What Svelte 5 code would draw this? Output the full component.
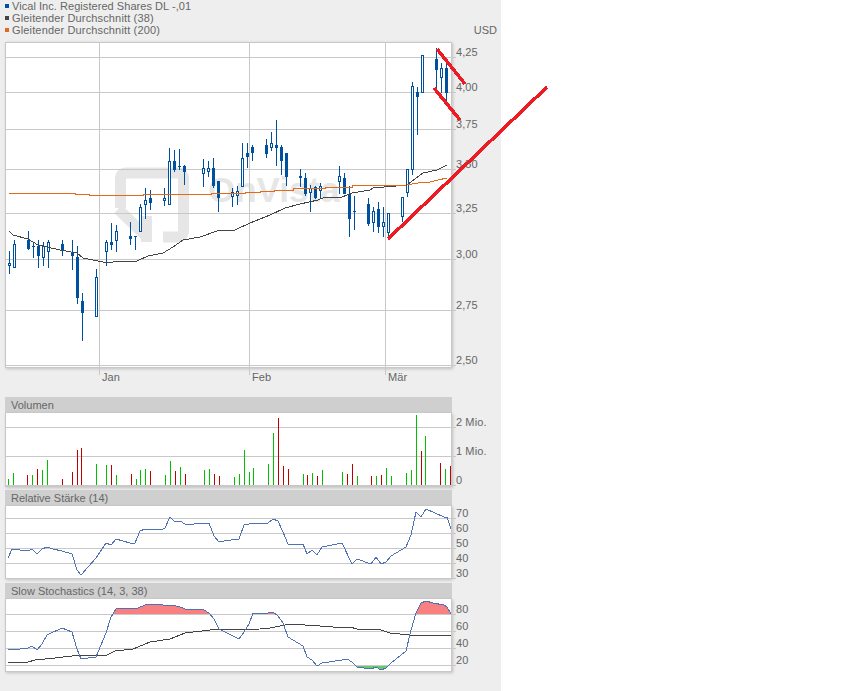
<script>
  const hGrid = [57, 92, 129, 169, 213, 259, 310, 365];
  const vGrid = [99, 249, 385];
  const priceLabels = [['4,25', 56], ['4,00', 91], ['3,75', 128], ['3,50', 168], ['3,25', 212], ['3,00', 258], ['2,75', 309], ['2,50', 364]];
  const months = [['Jan', 102], ['Feb', 252], ['Mär', 388]];

  // x, wick top, wick bottom, body top, body bottom, hollow
  const candles = [
    [9, 251, 274, 263, 266, 1], [14, 240, 268, 244, 268, 1], [28, 231, 250, 240, 249, 0], [33, 242, 258, 246, 247, 0],
    [38, 240, 268, 246, 256, 0], [43, 242, 266, 246, 258, 1], [48, 240, 268, 242, 252, 1], [62, 240, 256, 244, 251, 0],
    [72, 240, 270, 252, 256, 0], [77, 246, 304, 257, 298, 0], [82, 293, 341, 301, 313, 0], [96, 269, 317, 277, 317, 1],
    [106, 240, 266, 242, 252, 1], [111, 223, 250, 242, 245, 0], [116, 225, 252, 231, 241, 1], [130, 222, 245, 236, 239, 0],
    [135, 236, 250, 236, 237, 0], [140, 204, 232, 207, 232, 1], [145, 188, 219, 200, 205, 1], [150, 190, 210, 198, 203, 0],
    [164, 188, 206, 198, 201, 1], [169, 148, 205, 161, 205, 1], [174, 150, 172, 161, 170, 0], [179, 149, 170, 166, 167, 0],
    [184, 165, 185, 166, 172, 0], [203, 159, 187, 168, 174, 1], [208, 161, 177, 168, 172, 1], [213, 158, 188, 168, 186, 0],
    [218, 181, 212, 181, 198, 0], [232, 188, 207, 192, 197, 1], [237, 186, 205, 191, 196, 1], [242, 143, 187, 158, 187, 1],
    [247, 143, 168, 153, 157, 0], [252, 145, 161, 147, 153, 0], [266, 139, 158, 145, 154, 0], [271, 132, 151, 143, 148, 1],
    [276, 120, 166, 145, 148, 0], [281, 145, 175, 147, 161, 0], [286, 153, 186, 153, 177, 0], [300, 169, 187, 176, 178, 1],
    [305, 173, 196, 178, 194, 0], [310, 185, 212, 188, 193, 1], [315, 186, 199, 187, 198, 0], [320, 183, 199, 186, 191, 1],
    [339, 166, 194, 176, 182, 1], [344, 173, 194, 178, 194, 0], [349, 186, 237, 194, 219, 0], [354, 196, 230, 211, 212, 0],
    [368, 198, 226, 204, 224, 0], [373, 207, 232, 211, 223, 1], [378, 202, 233, 209, 227, 0], [383, 207, 237, 222, 227, 1],
    [388, 213, 237, 213, 233, 1], [402, 197, 222, 197, 217, 1], [407, 169, 197, 169, 193, 1], [412, 82, 175, 86, 170, 1],
    [417, 87, 135, 92, 97, 0], [422, 55, 93, 55, 93, 1], [436, 48, 88, 59, 70, 0], [441, 63, 93, 68, 78, 1], [446, 62, 102, 68, 93, 0]
  ];

  const ma38 = '9,231 13,235 28,239 38,245 60,250 77,253 83,258 103,262 113,262 137,261 148,256 163,253 173,247 183,240 200,237 217,231 235,230 250,223 260,219 270,215 285,208 300,204 318,200 325,197 342,197 352,193 370,190 373,188 407,185 423,173 437,170 447,165';
  const ma200 = '9,193 75,193 75,194 89,194 89,195 143,195 143,194 211,194 211,193 245,193 245,192 260,192 260,191 274,191 274,190 293,190 293,188 325,188 325,187 352,187 352,186 407,185 418,183 430,182 438,180 447,178';

  // x, top, up
  const volume = [
    [8, 479, 1], [13, 473, 1], [27, 475, 0], [32, 475, 1], [37, 469, 0], [42, 470, 1], [47, 460, 1], [62, 479, 0],
    [72, 472, 0], [77, 450, 0], [81, 448, 0], [96, 464, 1], [106, 465, 1], [111, 465, 0], [116, 475, 1], [131, 474, 0],
    [136, 479, 1], [140, 470, 1], [145, 469, 1], [150, 471, 0], [165, 475, 1], [170, 461, 1], [175, 471, 0], [180, 467, 1],
    [185, 474, 0], [204, 470, 1], [209, 469, 1], [214, 474, 0], [219, 476, 0], [234, 477, 1], [239, 474, 1], [244, 450, 1],
    [249, 472, 1], [253, 468, 1], [268, 464, 1], [273, 433, 1], [278, 418, 0], [283, 466, 0], [288, 469, 0], [303, 474, 1],
    [307, 475, 0], [312, 473, 1], [317, 476, 0], [322, 470, 1], [342, 472, 1], [347, 474, 0], [352, 464, 0], [357, 476, 1],
    [371, 476, 0], [376, 476, 1], [381, 475, 0], [386, 468, 1], [391, 476, 1], [406, 473, 1], [411, 470, 1], [416, 415, 1],
    [421, 451, 0], [425, 436, 1], [440, 463, 0], [445, 469, 1], [450, 466, 0]
  ];

  const rsi = '8,558 12,549 20,550 30,550 32,549 37,554 42,549 47,547 53,549 62,551 72,554 77,570 81,575 96,558 106,543 111,545 116,539 130,543 135,543 140,531 145,529 150,530 163,529 165,528 170,517 175,522 180,521 185,524 194,524 195,523 209,523 214,536 219,542 224,541 239,539 244,525 249,524 268,523 273,519 278,521 283,532 288,544 303,544 307,554 312,550 317,555 322,547 342,543 352,564 357,559 371,564 376,557 381,564 386,562 391,556 406,547 411,535 416,512 421,517 426,509 444,517 447,517 451,529';
  const slow = '8,649 12,650 28,648 32,646 37,650 42,644 47,635 62,628 72,632 77,649 81,659 96,657 106,633 111,617 116,609 123,608 128,609 138,608 145,605 157,604 163,605 173,605 183,608 185,609 194,609 204,610 209,613 214,619 219,629 239,639 244,632 249,624 253,613 268,613 273,612 278,616 283,623 288,637 303,646 307,657 312,660 317,666 322,663 342,660 347,659 352,662 357,667 371,669 376,667 381,670 386,668 391,663 406,651 411,630 416,613 421,603 426,601 433,603 444,605 447,607 451,614';
  const signal = '8,663 28,662 35,660 55,658 72,656 107,655 115,651 133,649 150,642 170,639 185,633 210,630 260,629 270,628 285,625 297,624 305,625 320,626 333,627 350,627 357,629 378,629 390,633 410,635 451,635';
</script>

{#snippet scale(labels)}
  {#each labels as [text, y]}
    <text class="tick" x="456" {y}>{text}</text>
  {/each}
{/snippet}

{#snippet rules(ys)}
  {#each ys as y}
    <line class="grid" x1="6" x2="456" y1={y + 0.5} y2={y + 0.5} />
  {/each}
{/snippet}

<div class="page">
  <header class="legend">
    <ul>
      <li><i class="swatch price"></i>Vical Inc. Registered Shares DL -,01</li>
      <li class="wide"><i class="swatch avg"></i>Gleitender Durchschnitt (38)</li>
      <li class="wide"><i class="swatch long"></i>Gleitender Durchschnitt (200)</li>
    </ul>
    <span class="currency">USD</span>
  </header>

  <section class="chart">
    <div class="plot main">
      <svg width="496" height="340" viewBox="5 42 496 340">
        <rect class="frame" x="5.5" y="42.5" width="446" height="325" />
        <g class="watermark">
          <path d="M120.5 208V178a5 5 0 0 1 5-5H178a5 5 0 0 1 5.500 5V231a6 6 0 0 1-6 6H163" />
          <path d="M146.500 216V242M118 209L147 237" />
          <text x="208" y="202">OnVista</text>
        </g>
        {@render rules(hGrid)}
        {#each vGrid as x}
          <line class="grid" x1={x + 0.5} x2={x + 0.5} y1="43" y2="375" />
        {/each}
        {@render scale(priceLabels)}
        {#each months as [text, x]}
          <text class="tick" {x} y="381">{text}</text>
        {/each}
        <g class="candles">
          {#each candles as [x, wt, wb, bt, bb, hollow]}
            <line x1={x + 0.5} x2={x + 0.5} y1={wt} y2={wb} />
            {#if hollow}
              <rect class="open" x={x - 0.5} y={bt + 0.5} width="2" height={bb - bt - 1} />
            {:else}
              <rect class="solid" x={x - 1} y={bt} width="3" height={bb - bt} />
            {/if}
          {/each}
        </g>
        <polyline class="line dark" points={ma38} />
        <polyline class="line orange" points={ma200} />
      </svg>
    </div>
  </section>

  <section class="chart volume">
    <h2>Volumen</h2>
    <div class="plot sub">
      <svg width="496" height="74" viewBox="5 413 496 74">
        <rect class="frame" x="5.5" y="412.5" width="446" height="74" />
        {@render rules([427, 456, 485])}
        {@render scale([['2 Mio.', 426], ['1 Mio.', 455], ['0', 484]])}
        {#each volume as [x, top, up]}
          <line class={up ? 'bar up' : 'bar down'} x1={x + 0.5} x2={x + 0.5} y1={top} y2="485" />
        {/each}
      </svg>
    </div>
  </section>

  <section class="chart rsi">
    <h2>Relative Stärke (14)</h2>
    <div class="plot sub">
      <svg width="496" height="73" viewBox="5 506 496 73">
        <rect class="frame" x="5.5" y="505.5" width="446" height="73" />
        {@render rules([518, 533, 548, 563, 578])}
        {@render scale([['70', 517], ['60', 532], ['50', 547], ['40', 562], ['30', 577]])}
        <polyline class="line blue" points={rsi} />
      </svg>
    </div>
  </section>

  <section class="chart stoch">
    <h2>Slow Stochastics (14, 3, 38)</h2>
    <div class="plot sub">
      <svg width="496" height="73" viewBox="5 599 496 73">
        <defs>
          <clipPath id="over"><rect x="5" y="599" width="447" height="15" /></clipPath>
          <clipPath id="under"><rect x="5" y="666" width="447" height="6" /></clipPath>
        </defs>
        <rect class="frame" x="5.5" y="598.5" width="446" height="73" />
        <polygon class="high" clip-path="url(#over)" points={slow + ' 451,614 8,614'} />
        <polygon class="low" clip-path="url(#under)" points={slow + ' 451,666 8,666'} />
        {@render rules([614, 631, 648, 665])}
        {@render scale([['80', 613], ['60', 630], ['40', 647], ['20', 664]])}
        <polyline class="line dark" points={signal} />
        <polyline class="line blue" points={slow} />
      </svg>
    </div>
  </section>

  <svg class="marks" width="850" height="691" viewBox="0 0 850 691">
    <line x1="388" y1="239" x2="547" y2="87" />
    <line x1="437" y1="49" x2="465" y2="84" />
    <line x1="434" y1="88" x2="460" y2="120" />
  </svg>
</div>

<style>
  :global(body) {
    background: #fff;
  }

  .page {
    position: relative;
    box-sizing: border-box;
    width: 501px;
    height: 691px;
    overflow: visible;
    background: #eee;
    font-family: "Liberation Sans", Arial, sans-serif;
    font-size: 11px;
    color: #666;
  }

  .legend {
    display: flex;
    justify-content: space-between;
    align-items: flex-end;
    height: 42px;
    padding: 0 4px 0 5px;
    box-sizing: border-box;
  }

  ul {
    list-style: none;
    margin: 0 0 6px;
    padding: 0;
  }

  li {
    display: flex;
    align-items: center;
    height: 12px;
    line-height: 12px;
    letter-spacing: 0.05px;
  }

  li.wide {
    letter-spacing: 0.15px;
  }

  .swatch {
    width: 4px;
    height: 4px;
    margin-right: 3px;
  }

  .price { background: #0050a0; }
  .avg { background: #444; }
  .long { background: #e0691a; }

  .currency {
    line-height: 12px;
    margin-bottom: 6px;
  }

  .chart {
    margin-left: 5px;
    width: 447px;
  }

  .volume { margin-top: 29px; }
  .rsi { margin-top: 3px; }
  .stoch { margin-top: 4px; }

  h2 {
    margin: 0;
    height: 16px;
    padding-left: 6px;
    background: #cfcfcf;
    font-size: 11px;
    font-weight: normal;
    line-height: 16px;
    color: #666;
  }

  .plot.main {
    height: 326px;
    box-shadow: 1px 1px 3px rgba(0, 0, 0, 0.2);
  }

  .plot.sub {
    height: 74px;
    box-shadow: 1px 1px 3px rgba(0, 0, 0, 0.2);
  }

  .rsi .plot.sub,
  .stoch .plot.sub {
    height: 73px;
  }

  svg {
    display: block;
    overflow: visible;
  }

  .frame {
    fill: #fff;
    stroke: #c8c8c8;
    shape-rendering: crispEdges;
  }

  .grid {
    stroke: #c8c8c8;
    shape-rendering: crispEdges;
  }

  .tick {
    fill: #666;
    font-size: 11px;
    letter-spacing: 0.1px;
  }

  .watermark path {
    fill: none;
    stroke: #e6e6e6;
    stroke-width: 11;
  }

  .watermark text {
    fill: #e6e6e6;
    font-size: 35px;
    font-weight: bold;
  }

  .candles {
    shape-rendering: crispEdges;
  }

  .candles line {
    stroke: #0050a0;
  }

  .open {
    fill: #fff;
    stroke: #0050a0;
  }

  .solid {
    fill: #0050a0;
  }

  .bar {
    shape-rendering: crispEdges;
  }

  .up { stroke: #00c000; }
  .down { stroke: #c00000; }

  .line {
    fill: none;
    stroke-width: 1;
    shape-rendering: crispEdges;
  }

  .dark { stroke: #444; }
  .orange { stroke: #e0691a; }
  .blue { stroke: #5072b4; }
  .high { fill: #f98080; }
  .low { fill: #66cc66; }

  .marks {
    position: absolute;
    top: 0;
    left: 0;
    pointer-events: none;
  }

  .marks line {
    stroke: #ed1c24;
    stroke-width: 3.5;
    shape-rendering: crispEdges;
  }
</style>
